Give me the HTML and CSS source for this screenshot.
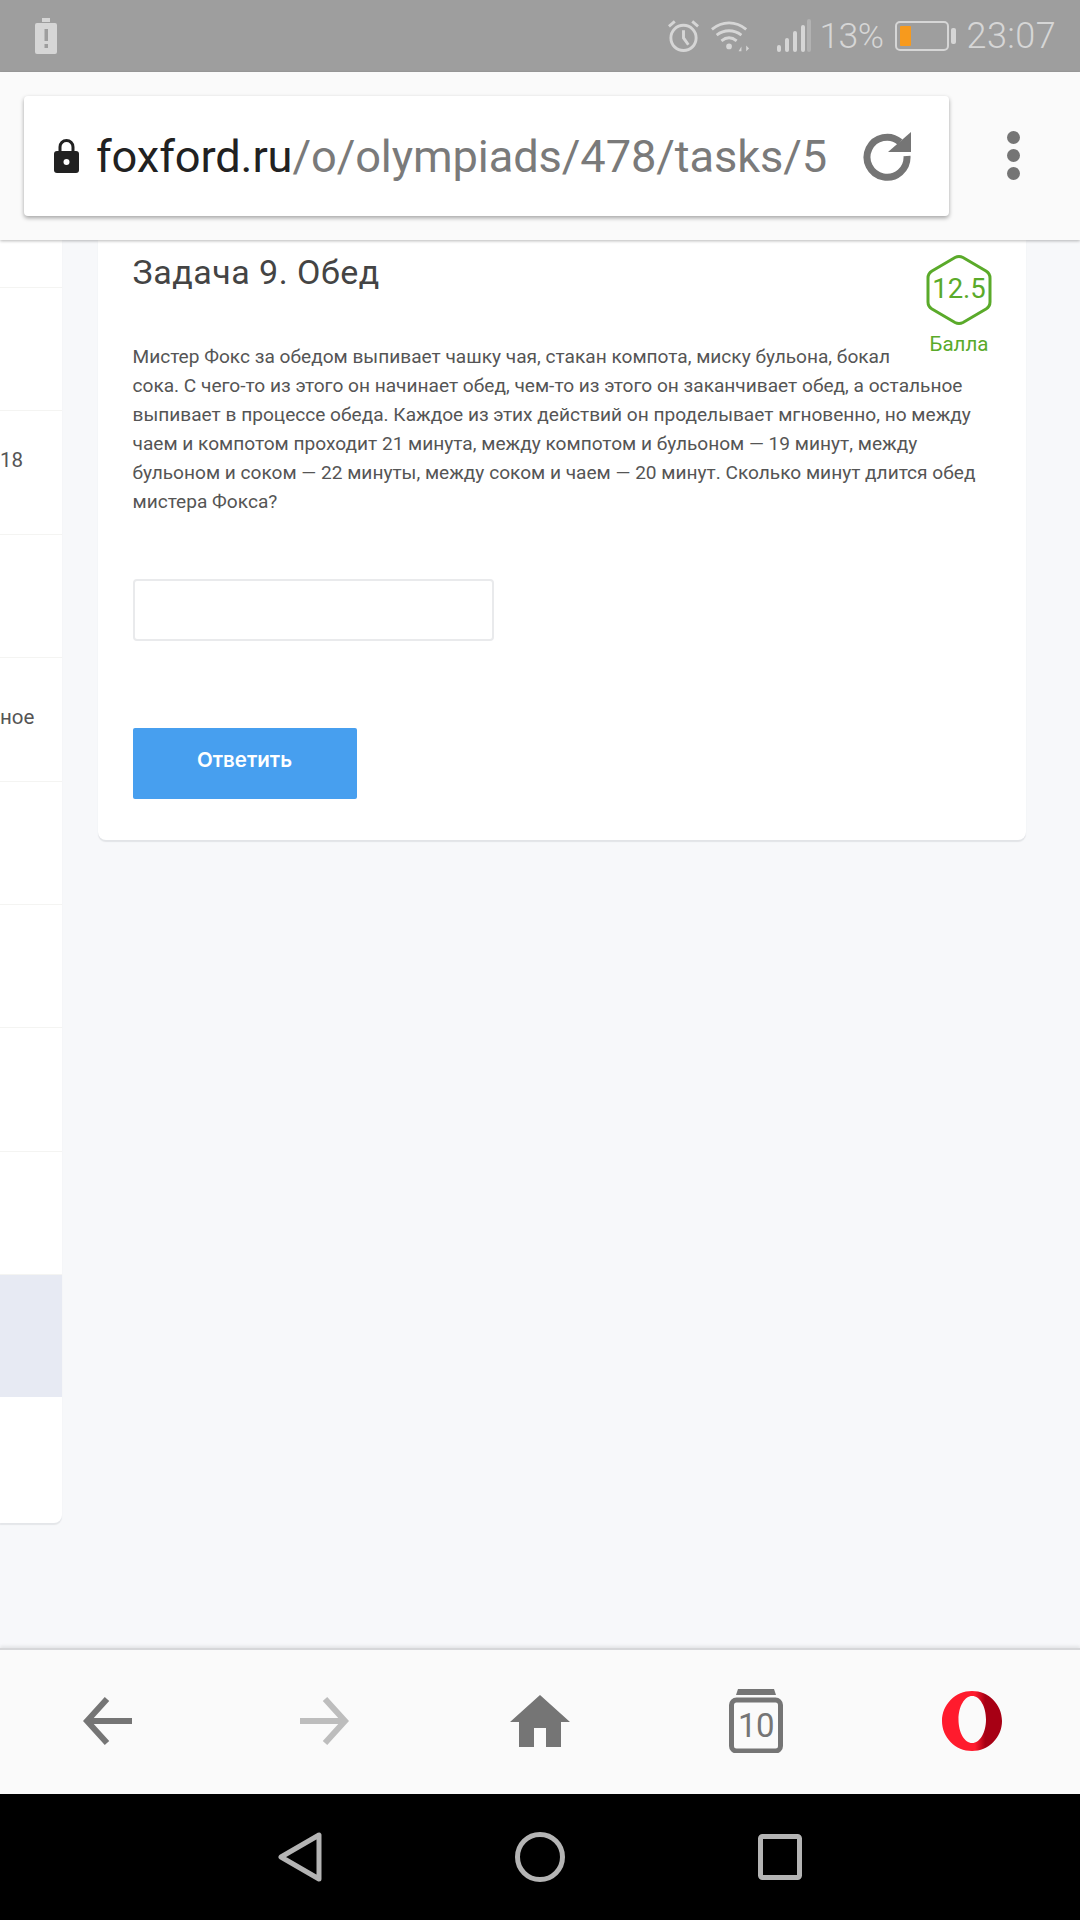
FILE: index.html
```html
<!DOCTYPE html>
<html lang="ru">
<head>
<meta charset="utf-8">
<title>Задача 9. Обед</title>
<link rel="stylesheet" href="styles.css">
</head>
<body>
<div class="screen">
  <header class="status">
    <svg class="st-warn" width="24" height="36" viewBox="0 0 24 36"><path d="M8 0h8v4H8zM3 5h18a2 2 0 0 1 2 2v27a2 2 0 0 1-2 2H3a2 2 0 0 1-2-2V7a2 2 0 0 1 2-2z" fill="#d6d6d6"/><rect x="10.500" y="11" width="3.500" height="12" fill="#9e9e9e"/><rect x="10.500" y="26" width="3.500" height="4" fill="#9e9e9e"/></svg>
    <div class="st-right">
      <svg class="st-alarm" width="33" height="34" viewBox="0 0 34 34" fill="none" stroke="#d6d6d6" stroke-width="3"><circle cx="17" cy="19" r="13"/><path d="M17 11v8l5 7M2 7l6-5M32 7l-6-5"/></svg>
      <svg class="st-wifi" width="40" height="34" viewBox="0 0 42 34" fill="none" stroke="#d6d6d6" stroke-width="3"><path d="M2 10c11-9 25-9 36 0M7 16c8-6 18-6 26 0M12 22c5-4 11-4 16 0"/><circle cx="20" cy="28" r="3" fill="#d6d6d6" stroke="none"/><path d="M30 33l3-5v5zM36 26v8M38 27l3 3-3 3z" fill="#d6d6d6" stroke="none"/></svg>
      <svg class="st-signal" width="34" height="34" viewBox="0 0 34 34" fill="#d6d6d6"><rect x="0" y="26" width="4" height="7" rx="2"/><rect x="8" y="19" width="4" height="14" rx="2"/><rect x="16" y="12" width="4" height="21" rx="2"/><rect x="24" y="6" width="4" height="27" rx="2"/><rect x="30" y="0" width="4" height="33" rx="2" opacity=".35"/></svg>
      <span class="st-pct">13%</span>
      <svg class="st-batt" width="61" height="30" viewBox="0 0 61 30" fill="none"><rect x="1" y="1" width="52" height="28" rx="4" stroke="#d6d6d6" stroke-width="2"/><rect x="5" y="5" width="11" height="20" rx="1" fill="#f79a1d"/><rect x="56" y="7" width="5" height="16" rx="2" fill="#d6d6d6"/></svg>
      <span class="st-time">23:07</span>
    </div>
  </header>

  <div class="toolbar">
    <div class="urlbox">
      <svg class="lock" width="25" height="34" viewBox="0 0 25 34"><path d="M6 15V8a6.500 6.500 0 0 1 13 0v7" fill="none" stroke="#212121" stroke-width="3"/><rect x="0" y="12" width="25" height="22" rx="3" fill="#212121"/><circle cx="12.500" cy="23" r="3" fill="#fff"/></svg>
      <div class="url"><span class="host">foxford.ru</span><span class="path">/o/olympiads/478/tasks/5</span></div>
      <svg class="reload" width="50" height="50" viewBox="0 0 50 50"><path d="M37 11A20 20 0 1 0 44 25" fill="none" stroke="#757575" stroke-width="7"/><path d="M25 21L48 21V1z" fill="#757575"/></svg>
    </div>
    <div class="menu"><i></i><i></i><i></i></div>
  </div>

  <main class="content">
    <aside class="side">
      <div class="row first"></div>
      <div class="row"></div>
      <div class="row up-lg"><span>18</span></div>
      <div class="row"></div>
      <div class="row up-sm"><span>ное</span></div>
      <div class="row"></div>
      <div class="row"></div>
      <div class="row"></div>
      <div class="row"></div>
      <div class="row current"></div>
      <div class="row last"></div>
    </aside>

    <section class="card">
      <div class="card-head">
        <h1 class="title">Задача 9. Обед</h1>
        <div class="score">
          <div class="hex">
            <svg width="66" height="72" viewBox="0 0 66 72"><path d="M29 3.500Q33 1.500 37 3.500L60 17Q64 19.500 64 24V48Q64 52.500 60 55L37 68.500Q33 70.500 29 68.500L6 55Q2 52.500 2 48V24Q2 19.500 6 17Z" fill="none" stroke="#5aaa2a" stroke-width="3"/></svg>
            <span class="hex-num">12.5</span>
          </div>
          <div class="score-label">Балла</div>
        </div>
      </div>
      <p class="task">Мистер Фокс за обедом выпивает чашку чая, стакан компота, миску бульона, бокал<br>сока. С чего-то из этого он начинает обед, чем-то из этого он заканчивает обед, а остальное выпивает в процессе обеда. Каждое из этих действий он проделывает мгновенно, но между чаем и компотом проходит 21 минута, между компотом и бульоном — 19 минут, между бульоном и соком — 22 минуты, между соком и чаем — 20 минут. Сколько минут длится обед мистера Фокса?</p>
      <input class="answer" type="text" aria-label="Ответ">
      <button class="submit" type="button">Ответить</button>
    </section>
  </main>

  <nav class="bottombar">
    <svg width="50" height="50" viewBox="0 0 50 50" fill="none" stroke="#757575" stroke-width="6"><path d="M49 25H5M24 3L4 25l20 22"/></svg>
    <svg width="50" height="50" viewBox="0 0 50 50" fill="none" stroke="#bdbdbd" stroke-width="6"><path d="M1 25h44M26 3l20 22-20 22"/></svg>
    <svg width="60" height="52" viewBox="0 0 60 52" fill="#757575"><path d="M30 0L60 27H51V52H36V33H24V52H9V27H0z"/></svg>
    <div class="tabs">
      <svg width="54" height="64" viewBox="0 0 54 64"><path d="M9 0H45L47 6H7z" fill="#757575"/><rect x="2.500" y="11" width="49" height="51" rx="5" fill="#fafafa" stroke="#757575" stroke-width="5"/></svg>
      <span class="tabs-num">10</span>
    </div>
    <svg width="60" height="60" viewBox="0 0 60 60"><defs><linearGradient id="op" x1="0" x2="1" y1="0" y2="0"><stop offset="0.550" stop-color="#ff1b2d"/><stop offset="0.720" stop-color="#a70014"/></linearGradient></defs><path fill-rule="evenodd" d="M30 0c16.500 0 30 13.400 30 30S46.500 60 30 60 0 46.600 0 30 13.500 0 30 0zm.2 5c-7.600 0-13.700 10.500-13.700 23.500S22.600 52 30.200 52 44 41.500 44 28.500 37.800 5 30.200 5z" fill="url(#op)"/></svg>
  </nav>

  <nav class="sysnav">
    <svg width="44" height="50" viewBox="0 0 44 50" fill="none" stroke="#b4b4b4" stroke-width="5" stroke-linejoin="round"><path d="M41 3V47L3 25Z"/></svg>
    <svg width="50" height="50" viewBox="0 0 50 50" fill="none" stroke="#b4b4b4" stroke-width="5"><circle cx="25" cy="25" r="22.500"/></svg>
    <svg width="44" height="46" viewBox="0 0 44 46" fill="none" stroke="#b4b4b4" stroke-width="5"><rect x="2.500" y="2.500" width="39" height="41" rx="2"/></svg>
  </nav>
</div>
</body>
</html>
```
FILE: styles.css
```css
* { box-sizing: border-box; }
html, body { margin: 0; padding: 0; }
body { width: 1080px; height: 1920px; overflow: hidden; font-family: Roboto, "Noto Sans", sans-serif; }
.screen { width: 1080px; height: 1920px; display: flex; flex-direction: column; background: #f7f8fa; }

.status { height: 72px; flex: none; background: #9e9e9e; display: flex; align-items: center; justify-content: space-between; padding: 0 24px 0 34px; color: #d6d6d6; }
.st-right { display: flex; align-items: center; }
.st-alarm { margin-right: 10px; }
.st-wifi { margin-right: 27px; }
.st-signal { margin-right: 8px; }
.st-pct { font-size: 35.500px; font-weight: 300; margin-right: 11px; letter-spacing: -.5px; }
.st-batt { margin-right: 11px; }
.st-time { font-size: 36px; font-weight: 300; letter-spacing: .4px; }

.toolbar { height: 168px; flex: none; background: #fafafa; display: flex; align-items: center; padding: 0 0 0 24px; box-shadow: 0 1px 3px rgba(0,0,0,.28); position: relative; z-index: 2; }
.urlbox { width: 925px; height: 120px; background: #fff; border-radius: 4px; box-shadow: 0 2px 4px rgba(0,0,0,.35); display: flex; align-items: center; padding-left: 30px; }
.lock { flex: none; margin-right: 17px; }
.url { font-size: 45.200px; white-space: nowrap; flex: none; width: 735px; letter-spacing: -.1px; }
.host { color: #212121; }
.path { color: #7a7a7a; }
.reload { flex: none; margin-left: 32px; }
.menu { display: flex; flex-direction: column; gap: 5px; margin-left: 58px; margin-top: -1px; }
.menu i { display: block; width: 13px; height: 13px; border-radius: 50%; background: #757575; }

.content { flex: 1; display: flex; align-items: flex-start; gap: 36px; overflow: hidden; }
.side { width: 62px; flex: none; background: #fff; border-radius: 0 0 8px 0; box-shadow: 0 2px 1px #e4e6e9; font-size: 20.500px; color: #555; }
.row { height: 123.400px; border-bottom: 1px solid #f4f4f2; display: flex; align-items: center; overflow: hidden; white-space: nowrap; }
.row.first { height: 48px; }
.row.up-lg { padding-bottom: 25px; }
.row.up-sm { padding-bottom: 5px; }
.row.current { background: #e7eaf3; border-bottom: 0; height: 122px; }
.row.last { border-bottom: 0; height: 126px; }

.card { width: 928px; height: 600px; flex: none; background: #fff; border-radius: 0 0 8px 8px; box-shadow: 0 2px 1px #e2e4e7; padding: 11px 34px 0 34.500px; }
.card-head { display: flex; justify-content: space-between; align-items: flex-start; height: 91px; }
.title { margin: 0; font-size: 34px; line-height: 42px; font-weight: 400; color: #444; letter-spacing: .5px; }
.score { width: 76px; margin-right: -5px; margin-top: 3px; display: flex; flex-direction: column; align-items: center; color: #5aaa2a; }
.hex { position: relative; width: 66px; height: 72px; display: flex; align-items: center; justify-content: center; padding-bottom: 3px; }
.hex svg { position: absolute; left: 0; top: 0; }
.hex-num { position: relative; font-size: 27.500px; }
.score-label { font-size: 20.500px; line-height: 24px; margin-top: 6px; }
.task { margin: 0; height: 169px; font-size: 19.100px; line-height: 29px; color: #555; width: 860px; }
.answer { display: block; width: 361px; height: 62px; margin-top: 68px; border: 2px solid #e9eaec; border-radius: 4px; background: #fff; }
.submit { display: block; width: 224px; height: 71px; margin-top: 87px; border: 0; border-radius: 2px; background: #479fef; color: #fff; font-family: Inter, "Open Sans", sans-serif; font-size: 20.500px; font-weight: 600; padding: 0 0 8px; }

.bottombar { height: 146px; flex: none; background: #fafafa; border-top: 2px solid #d6d7d9; box-shadow: 0 -2px 3px rgba(0,0,0,.08); display: grid; grid-template-columns: repeat(5, 216px); justify-items: center; align-items: center; padding-bottom: 2px; position: relative; }
.tabs { position: relative; width: 54px; height: 64px; }
.tabs svg { display: block; }
.tabs-num { position: absolute; left: 0; right: 0; top: 16px; text-align: center; font-size: 33px; line-height: 42px; color: #757575; letter-spacing: -.5px; }

.sysnav { height: 126px; flex: none; background: #000; display: grid; grid-template-columns: 300px 180px 300px; justify-content: center; justify-items: center; align-items: center; }
```
